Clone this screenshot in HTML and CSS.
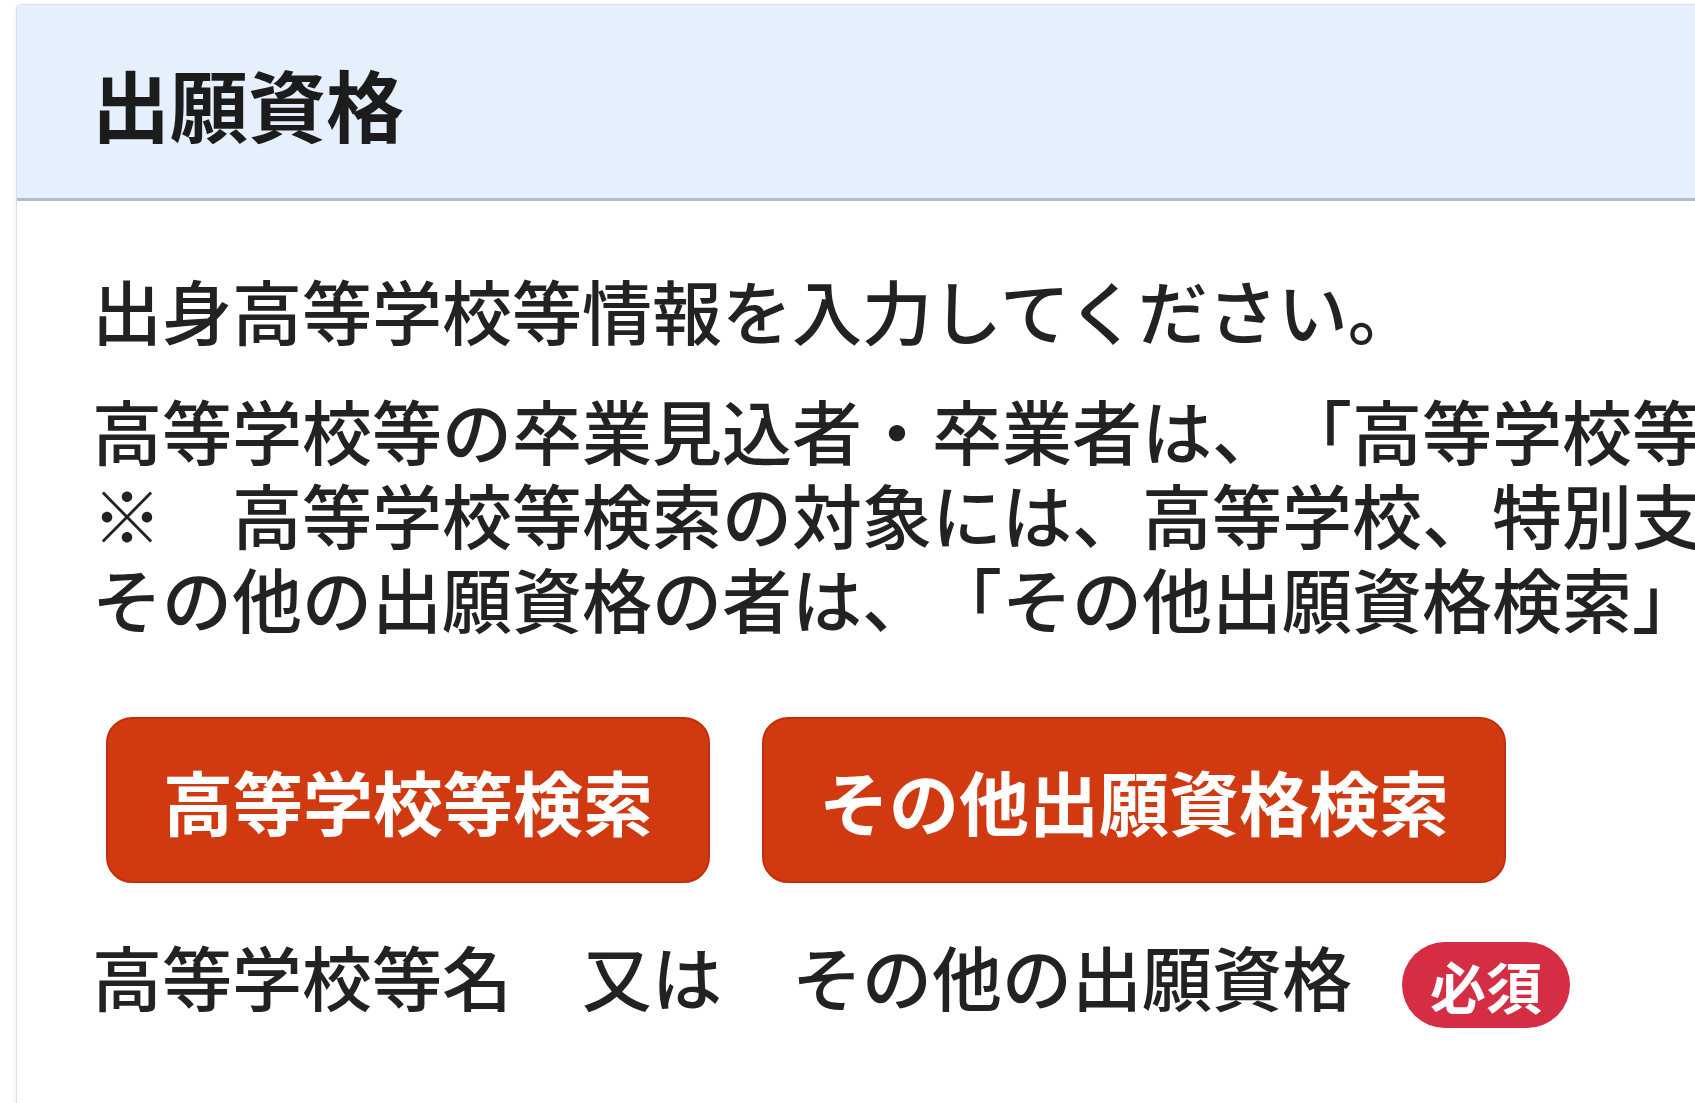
FILE: index.html
```html
<!DOCTYPE html>
<html lang="ja">
<head>
<meta charset="utf-8">
<title>出願資格</title>
<link rel="stylesheet" href="styles.css">
</head>
<body>
<section class="panel">
  <header class="panel-header">
    <h2 class="panel-title">出願資格</h2>
  </header>
  <div class="panel-body">
    <p class="lead">出身高等学校等情報を入力してください。</p>
    <p class="notes">高等学校等の卒業見込者・卒業者は、「高等学校等検索」ボタンより出身高等学校等を検索してください。<br>※　高等学校等検索の対象には、高等学校、特別支援学校の高等部、高等専門学校、中等教育学校が含まれます。<br>その他の出願資格の者は、「その他出願資格検索」ボタンより検索してください。</p>
    <div class="actions">
      <button class="btn" type="button">高等学校等検索</button>
      <button class="btn" type="button">その他出願資格検索</button>
    </div>
    <div class="field-label">
      <span class="label-text">高等学校等名　又は　その他の出願資格</span>
      <span class="badge">必須</span>
    </div>
  </div>
</section>
</body>
</html>
```

FILE: styles.css
```css
html, body {
  margin: 0;
  padding: 0;
  background: #ffffff;
  overflow: hidden;
  width: 1695px;
  height: 1103px;
}

body {
  font-family: "Noto Sans CJK JP", "Noto Sans", sans-serif;
  color: #222222;
  text-spacing-trim: space-all;
}

.panel {
  margin: 4px 0 0 16px;
  width: 2400px;
  border: 1px solid #d9dee4;
  border-right: none;
  border-top-left-radius: 6px;
  box-shadow: -1px 0 3px rgba(0, 0, 0, 0.06);
  background: #ffffff;
  height: 1200px;
}

.panel-header {
  height: 193px;
  background: #e6f0fd;
  border-bottom: 3px solid #b3bdc7;
  border-top-left-radius: 6px;
  display: flex;
  align-items: center;
  padding-left: 75px;
}

.panel-title {
  margin: 0;
  font-size: 78px;
  font-weight: 700;
  line-height: 1;
  color: #1c1c1c;
  padding-top: 2px;
}

.panel-body {
  padding: 67px 0 0 75px;
}

.lead,
.notes {
  margin: 0;
  font-size: 70px;
  font-weight: 500;
  line-height: 84px;
  white-space: nowrap;
}

.lead {
  margin-bottom: 36px;
}

.actions {
  display: flex;
  gap: 52px;
  margin: 77px 0 0 14px;
}

.btn {
  height: 166px;
  padding: 0 55px;
  box-sizing: border-box;
  display: inline-flex;
  align-items: center;
  justify-content: center;
  font-family: "Noto Sans CJK JP", "Noto Sans", sans-serif;
  font-size: 70px;
  font-weight: 700;
  color: #ffffff;
  background: #d13910;
  border: 2px solid #c0310b;
  border-radius: 26px;
  cursor: pointer;
}

.field-label {
  display: flex;
  align-items: flex-start;
  gap: 50px;
  margin-top: 51px;
  white-space: nowrap;
}

.label-text {
  font-size: 70px;
  font-weight: 500;
  line-height: 84px;
}

.badge {
  margin-top: 8px;
  height: 86px;
  padding: 0 28px;
  box-sizing: border-box;
  display: inline-flex;
  align-items: center;
  border-radius: 43px;
  background: #d52d43;
  color: #ffffff;
  font-size: 56px;
  font-weight: 700;
  line-height: 1;
}
```
